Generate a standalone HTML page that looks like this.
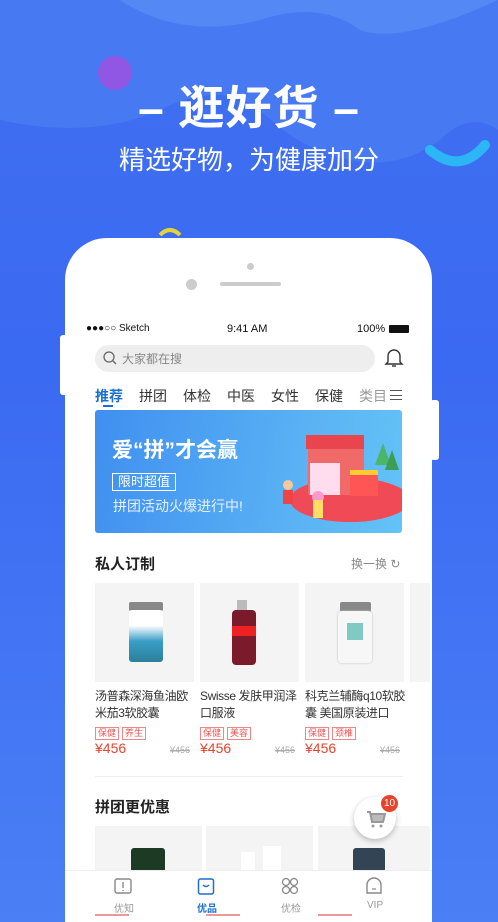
<!DOCTYPE html>
<html><head><meta charset="utf-8"><style>
*{margin:0;padding:0;box-sizing:border-box}
html,body{width:498px;height:922px;overflow:hidden}
body{position:relative;font-family:"Liberation Sans","Noto Sans CJK SC",sans-serif;background:linear-gradient(180deg,#3f6ff0 0%,#3b6af2 40%,#4a7ff5 100%)}
.a{position:absolute}
.t{white-space:nowrap}
.card{background:#f4f4f4}
.tag{display:inline-block;border:1px solid #e88;color:#e55;font-size:9px;line-height:11px;padding:0 2px;margin-right:3px}
.price{color:#e8412c;font-size:14px}
.old{color:#aaa;font-size:9px;text-decoration:line-through}
.nm{font-size:12px;color:#333;line-height:17px;letter-spacing:-0.4px}
</style></head><body>
<svg class="a" style="left:0;top:0" width="498" height="320">
<path d="M0 0H498V130Q470 110 440 140Q400 170 350 160Q300 150 260 110Q220 80 160 110Q90 140 0 120Z" fill="#4a7cf2" opacity=".8"/>
<path d="M120 0Q180 40 260 20Q320 0 360 30Q400 45 498 0Z" fill="#5a8ef5" opacity=".7"/>
<circle cx="115" cy="73" r="17" fill="#a34ee0" opacity=".8"/>
<path d="M430 150Q460 175 485 145" stroke="#2bb6f5" stroke-width="10" fill="none" stroke-linecap="round"/>
<path d="M160 235Q170 225 180 235" stroke="#e8d23a" stroke-width="4" fill="none"/>
</svg>
<div class="a t" style="left:0;width:498px;top:72px;text-align:center;color:#fff;font-size:46px;font-weight:bold;letter-spacing:1px">– 逛好货 –</div>
<div class="a t" style="left:0;width:498px;top:140px;text-align:center;color:#fff;font-size:26px">精选好物，为健康加分</div>
<div class="a" style="left:60px;top:335px;width:8px;height:60px;background:#fff;border-radius:3px"></div>
<div class="a" style="left:430px;top:400px;width:9px;height:60px;background:#fff;border-radius:3px"></div>
<div class="a" style="left:65px;top:238px;width:367px;height:684px;background:#fff;border-radius:42px 42px 0 0"></div>
<div class="a" style="left:247px;top:263px;width:7px;height:7px;border-radius:50%;background:#ccc"></div>
<div class="a" style="left:186px;top:279px;width:11px;height:11px;border-radius:50%;background:#ccc"></div>
<div class="a" style="left:220px;top:282px;width:61px;height:4px;border-radius:2px;background:#ccc"></div>
<div class="a t" style="left:86px;top:323px;font-size:10px;color:#111">●●●○○ Sketch</div>
<div class="a t" style="left:227px;top:323px;font-size:11px;color:#111">9:41 AM</div>
<div class="a t" style="left:357px;top:323px;font-size:11px;color:#111">100%</div>
<div class="a" style="left:389px;top:325px;width:20px;height:8px;background:#111;border-radius:1px"></div>
<div class="a" style="left:95px;top:345px;width:280px;height:27px;background:#eee;border-radius:14px"></div>
<svg class="a" style="left:103px;top:351px" width="14" height="14"><circle cx="6" cy="6" r="5" stroke="#666" fill="none" stroke-width="1.3"/><path d="M10 10l3 3" stroke="#666" stroke-width="1.3"/></svg>
<div class="a t" style="left:122px;top:350px;font-size:12px;color:#888">大家都在搜</div>
<svg class="a" style="left:384px;top:347px" width="20" height="22"><path d="M4 15V9a6 6 0 0112 0v6l2 2H2z" stroke="#333" fill="none" stroke-width="1.4"/><path d="M8 19h4" stroke="#333" stroke-width="1.4"/></svg>
<div class="a t" style="left:95px;top:386px;font-size:14px;color:#333">
<span style="color:#1a6fcf;font-weight:bold">推荐</span><span style="margin-left:16px">拼团</span><span style="margin-left:16px">体检</span><span style="margin-left:16px">中医</span><span style="margin-left:16px">女性</span><span style="margin-left:16px">保健</span><span style="margin-left:16px;color:#999">类目</span></div>
<div class="a" style="left:387px;top:388px;width:16px;height:14px;background:#fff"></div>
<div class="a" style="left:390px;top:390px;width:12px;height:10px;border-top:1.5px solid #555;border-bottom:1.5px solid #555"></div>
<div class="a" style="left:390px;top:394.5px;width:12px;height:1.5px;background:#555"></div>
<div class="a" style="left:103px;top:405px;width:10px;height:2px;background:#1a6fcf"></div>
<div class="a" style="left:95px;top:410px;width:307px;height:123px;border-radius:3px;background:linear-gradient(100deg,#3f8ff0,#5cb4f4 70%,#63c3f6)"></div>
<div class="a t" style="left:112px;top:434px;font-size:21px;font-weight:bold;color:#fff">爱“拼”才会赢</div>
<div class="a t" style="left:112px;top:473px;font-size:13px;color:#fff;border:1.5px solid #fff;padding:0 5px;line-height:16px">限时超值</div>
<div class="a t" style="left:113px;top:496px;font-size:14px;color:#e6f1ff">拼团活动火爆进行中!</div>
<svg class="a" style="left:270px;top:425px" width="132" height="108">
<ellipse cx="80" cy="75" rx="60" ry="22" fill="#ef4a55"/>
<rect x="38" y="20" width="56" height="50" fill="#f06a6a"/>
<rect x="40" y="38" width="30" height="32" fill="#fde"/>
<rect x="36" y="10" width="58" height="14" fill="#e8454f"/>
<rect x="80" y="45" width="28" height="26" fill="#f55"/><rect x="80" y="45" width="28" height="5" fill="#fc3"/>
<path d="M105 40l8-22 8 22z" fill="#4bb56a"/><path d="M115 45l7-20 7 20z" fill="#3a9e57"/>
<circle cx="48" cy="72" r="6" fill="#f9c"/><rect x="43" y="75" width="10" height="18" fill="#fd6"/>
<circle cx="18" cy="60" r="5" fill="#f5c9a0"/><rect x="13" y="65" width="10" height="14" fill="#e44"/>
</svg>
<div class="a t" style="left:95px;top:553px;font-size:15px;font-weight:bold;color:#222">私人订制</div>
<div class="a t" style="left:351px;top:555px;font-size:12px;color:#888">换一换 ↻</div>
<div class="a card" style="left:95px;top:583px;width:99px;height:99px"></div>
<div class="a card" style="left:200px;top:583px;width:99px;height:99px"></div>
<div class="a card" style="left:305px;top:583px;width:99px;height:99px"></div>
<div class="a card" style="left:410px;top:583px;width:20px;height:99px"></div>
<div class="a" style="left:129px;top:602px;width:34px;height:9px;background:#888;border-radius:2px"></div>
<div class="a" style="left:129px;top:610px;width:34px;height:52px;background:linear-gradient(180deg,#fff 30%,#3a9ec7 60%,#2c7f9a);border-radius:3px"></div>
<div class="a" style="left:237px;top:600px;width:10px;height:10px;background:#bbb"></div>
<div class="a" style="left:232px;top:610px;width:24px;height:55px;background:#7a1a2a;border-radius:4px"></div>
<div class="a" style="left:232px;top:626px;width:24px;height:10px;background:#e22"></div>
<div class="a" style="left:340px;top:602px;width:31px;height:10px;background:#888;border-radius:2px"></div>
<div class="a" style="left:338px;top:611px;width:34px;height:52px;background:#f7f7f7;border-radius:4px;box-shadow:0 0 2px #bbb"></div>
<div class="a" style="left:347px;top:623px;width:16px;height:17px;background:#7fcbc2"></div>
<div class="a nm" style="left:95px;top:688px;width:100px">汤普森深海鱼油欧米茄3软胶囊</div>
<div class="a nm" style="left:200px;top:688px;width:104px">Swisse 发肤甲润泽口服液</div>
<div class="a nm" style="left:305px;top:688px;width:104px">科克兰辅酶q10软胶囊 美国原装进口</div>
<div class="a t" style="left:95px;top:723px"><span class="tag">保健</span><span class="tag">养生</span></div>
<div class="a t" style="left:200px;top:723px"><span class="tag">保健</span><span class="tag">美容</span></div>
<div class="a t" style="left:305px;top:723px"><span class="tag">保健</span><span class="tag">颈椎</span></div>
<div class="a t price" style="left:95px;top:740px">¥456</div><div class="a t old" style="left:170px;top:745px">¥456</div>
<div class="a t price" style="left:200px;top:740px">¥456</div><div class="a t old" style="left:275px;top:745px">¥456</div>
<div class="a t price" style="left:305px;top:740px">¥456</div><div class="a t old" style="left:380px;top:745px">¥456</div>
<div class="a" style="left:95px;top:776px;width:308px;height:1px;background:#eee"></div>
<div class="a t" style="left:95px;top:796px;font-size:15px;font-weight:bold;color:#222">拼团更优惠</div>
<div class="a card" style="left:95px;top:826px;width:107px;height:60px"></div>
<div class="a card" style="left:206px;top:826px;width:107px;height:60px"></div>
<div class="a card" style="left:318px;top:826px;width:112px;height:60px"></div>
<div class="a" style="left:131px;top:848px;width:34px;height:24px;background:#1d3a25;border-radius:3px"></div>
<div class="a" style="left:241px;top:852px;width:14px;height:20px;background:#fff;border-radius:2px"></div>
<div class="a" style="left:263px;top:846px;width:18px;height:26px;background:#fff"></div>
<div class="a" style="left:353px;top:848px;width:32px;height:24px;background:#345;border-radius:3px"></div>
<div class="a" style="left:354px;top:797px;width:42px;height:42px;border-radius:50%;background:#fff;box-shadow:0 2px 6px rgba(0,0,0,.25)"></div>
<svg class="a" style="left:365px;top:808px" width="22" height="22"><path d="M2 4h3l2 10h11l2-8H6" stroke="#999" stroke-width="2" fill="#bbb"/><circle cx="8" cy="18" r="1.5" fill="#999"/><circle cx="16" cy="18" r="1.5" fill="#999"/></svg>
<div class="a t" style="left:381px;top:795px;width:17px;height:17px;border-radius:50%;background:#e8412c;color:#fff;font-size:10px;text-align:center;line-height:17px">10</div>
<div class="a" style="left:65px;top:870px;width:367px;height:52px;background:#fff;border-top:1px solid #eee"></div>
<svg class="a" style="left:114px;top:877px" width="18" height="18"><rect x="1" y="2" width="16" height="14" rx="2" stroke="#888" fill="none" stroke-width="1.4"/><path d="M9 5v6M9 13v1" stroke="#888" stroke-width="1.4"/></svg>
<svg class="a" style="left:197px;top:877px" width="18" height="18"><rect x="1.5" y="2" width="15" height="15" rx="2" stroke="#1a6fcf" fill="none" stroke-width="1.5"/><path d="M6 8q3 3 6 0" stroke="#1a6fcf" fill="none" stroke-width="1.4"/></svg>
<svg class="a" style="left:281px;top:877px" width="18" height="18"><circle cx="5" cy="5" r="3.5" stroke="#888" fill="none" stroke-width="1.3"/><circle cx="13" cy="5" r="3.5" stroke="#888" fill="none" stroke-width="1.3"/><circle cx="5" cy="13" r="3.5" stroke="#888" fill="none" stroke-width="1.3"/><circle cx="13" cy="13" r="3.5" stroke="#888" fill="none" stroke-width="1.3"/></svg>
<svg class="a" style="left:365px;top:877px" width="18" height="18"><path d="M2 16V8a7 7 0 0114 0v8z" stroke="#888" fill="none" stroke-width="1.4"/><path d="M7 12h4" stroke="#888" stroke-width="1.2"/></svg>
<div class="a t" style="left:114px;top:900px;font-size:10px;color:#999">优知</div>
<div class="a t" style="left:197px;top:900px;font-size:10px;color:#1a6fcf;font-weight:bold">优品</div>
<div class="a t" style="left:281px;top:900px;font-size:10px;color:#999">优检</div>
<div class="a t" style="left:367px;top:900px;font-size:10px;color:#999">VIP</div>
<div class="a" style="left:95px;top:914px;width:34px;height:2px;background:#e99"></div>
<div class="a" style="left:206px;top:914px;width:34px;height:2px;background:#e99"></div>
<div class="a" style="left:318px;top:914px;width:34px;height:2px;background:#e99"></div>
</body></html>
